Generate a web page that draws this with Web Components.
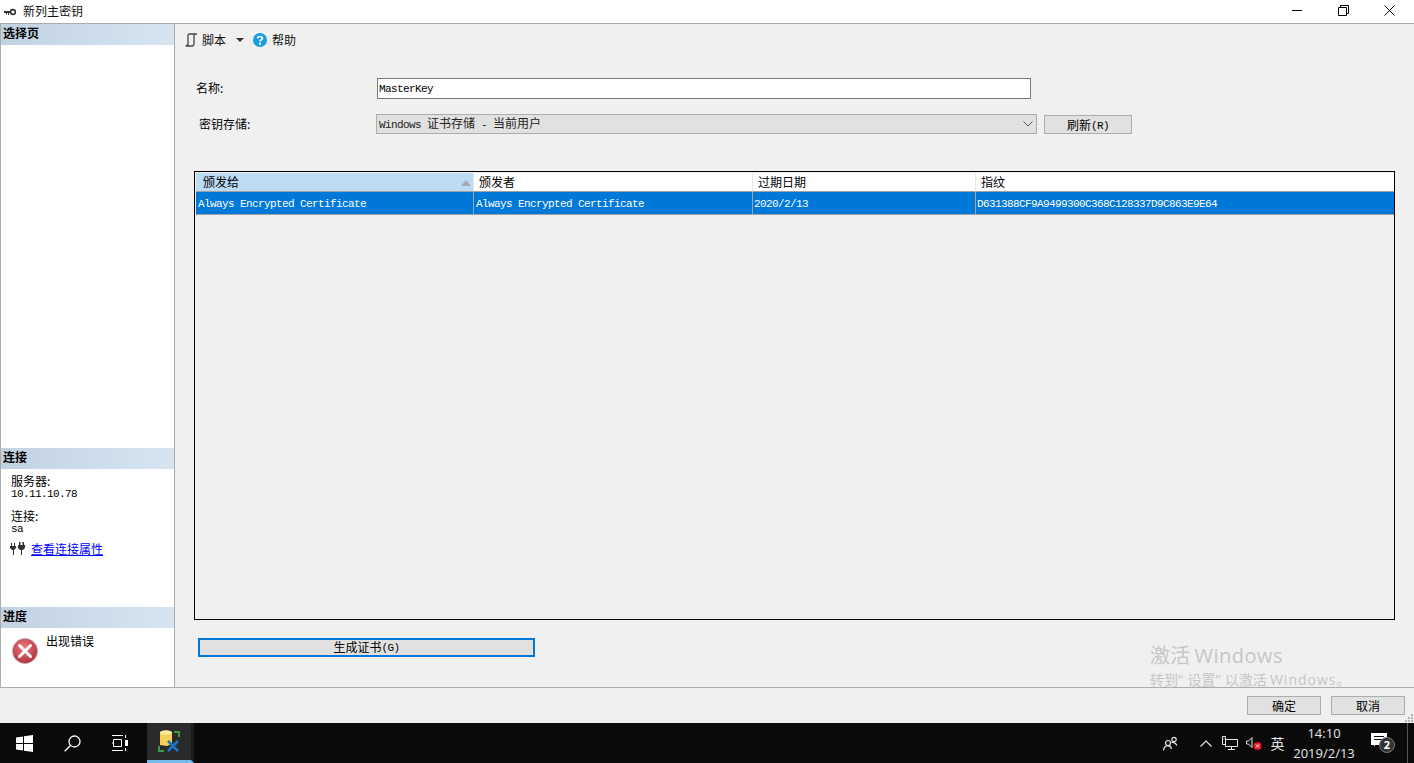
<!DOCTYPE html>
<html lang="zh">
<head>
<meta charset="utf-8">
<title>新列主密钥</title>
<style>
  html, body { margin: 0; height: 100%; overflow: hidden; background: #f0f0f0; }
  body { font: 12px/14px "Noto Sans CJK SC", sans-serif; color: #000; }
  key-app { height: 763px; }
</style>
</head>
<body>
<key-app></key-app>
<script>
const MONO = `.m { font: 11px/14px "Liberation Mono", monospace; letter-spacing: -.6px; }`;

class WinTitlebar extends HTMLElement {
  connectedCallback() {
    this.attachShadow({ mode: 'open' });
    this.shadowRoot.innerHTML = `
      <style>
        :host { display: flex; align-items: center; height: 23px; background: #fff; border-bottom: 1px solid #acacac; flex: none; }
        .icon { margin-left: 4px; width: 12px; height: 8px; flex: none; }
        .name { margin: -2px 0 0 7px; flex: 1; color: #111; }
        .ctl { width: 46px; height: 23px; display: flex; align-items: center; justify-content: center; flex: none; margin-top: -3px; }
        .ctls { display: flex; padding-right: 2px; }
      </style>
      <svg class="icon" viewBox="0 0 12 8"><path d="M0 3h7v2H5v2H4V5H3v1.5H2V5H0z" fill="#333"/><circle cx="9" cy="4" r="2.4" fill="none" stroke="#333" stroke-width="1.6"/></svg>
      <span class="name">新列主密钥</span>
      <div class="ctls">
        <div class="ctl"><svg width="10" height="10" viewBox="0 0 10 10"><path d="M0 5.5h10" stroke="#000"/></svg></div>
        <div class="ctl"><svg width="11" height="11" viewBox="0 0 11 11" fill="none" stroke="#000"><path d="M.5 2.5h8v8h-8z"/><path d="M2.5 2.5v-2h8v8h-2"/></svg></div>
        <div class="ctl"><svg width="11" height="11" viewBox="0 0 11 11"><path d="M.5.5l10 10M10.5.5l-10 10" stroke="#000" fill="none"/></svg></div>
      </div>`;
  }
}
customElements.define('win-titlebar', WinTitlebar);

class SideSection extends HTMLElement {
  connectedCallback() {
    this.attachShadow({ mode: 'open' });
    this.shadowRoot.innerHTML = `
      <style>
        :host { display: block; }
        .head { height: 21px; padding-left: 2px; font-weight: 700; line-height: 18px; color: #000;
                background: linear-gradient(90deg, #c2d2e1, #d7e5f2); }
      </style>
      <div class="head">${this.getAttribute('label')}</div>
      <slot></slot>`;
  }
}
customElements.define('side-section', SideSection);

class SidePanel extends HTMLElement {
  connectedCallback() {
    this.attachShadow({ mode: 'open' });
    this.shadowRoot.innerHTML = `
      <style>
        ${MONO}
        :host { display: flex; flex-direction: column; width: 173px; flex: none; background: #fff;
                border-left: 1px solid #acacac; border-right: 1px solid #acacac; }
        .sel { height: 424px; }
        .conn { height: 159px; }
        .conn-body { padding: 5px 0 0 10px; }
        .conn-body div { height: 13px; line-height: 13px; white-space: nowrap; }
        .conn-body .v { height: 10px; line-height: 11px; margin-top: 2px; }
        .gap { margin-top: 10px; }
        .linkrow { display: flex; align-items: center; margin-top: 6px; margin-left: -1px; height: 16px !important; }
        a { color: #00f; text-decoration: underline; margin-left: 6px; }
        .prog { display: flex; padding: 10px 0 0 11px; }
        .prog span { margin: -4px 0 0 8px; }
      </style>
      <side-section class="sel" label="选择页"></side-section>
      <side-section class="conn" label="连接">
        <div class="conn-body">
          <div>服务器:</div>
          <div class="v m">10.11.10.78</div>
          <div class="gap">连接:</div>
          <div class="v m">sa</div>
          <div class="linkrow">
            <svg width="15" height="13" viewBox="0 0 15 13" fill="#333"><path d="M0 4h6v2L4 8v5H3V8H2L0 6zM1 1h1v3H1zM4 1h1v3H4zM8 3h7v3l-2 2h-1v5h-1V8h-1L8 6zM9 0h1.500v3H9zM12.500 0H14v3h-1.500z"/></svg>
            <a>查看连接属性</a>
          </div>
        </div>
      </side-section>
      <side-section label="进度">
        <div class="prog">
          <svg width="26" height="26" viewBox="0 0 26 26">
            <defs><radialGradient id="e" cx="45%" cy="35%" r="70%"><stop offset="0" stop-color="#e9787f"/><stop offset="1" stop-color="#b32c38"/></radialGradient></defs>
            <circle cx="13" cy="13" r="12.500" fill="url(#e)" stroke="#a8a8a8" stroke-width=".6"/>
            <path d="M7.500 7.500l11 11M18.500 7.500l-11 11" stroke="#fff" stroke-width="3" stroke-linecap="round"/>
          </svg>
          <span>出现错误</span>
        </div>
      </side-section>`;
  }
}
customElements.define('side-panel', SidePanel);

class DlgButton extends HTMLElement {
  connectedCallback() {
    this.attachShadow({ mode: 'open' });
    this.shadowRoot.innerHTML = `
      <style>
        :host { display: block; box-sizing: border-box; height: 19px; text-align: center; line-height: 17px;
                background: #e1e1e1; border: 1px solid #adadad; color: #000; white-space: nowrap; }
        :host([focus]) { border: 2px solid #0078d7; line-height: 13px; }
      </style>
      <slot></slot>`;
  }
}
customElements.define('dlg-button', DlgButton);

class KeyToolbar extends HTMLElement {
  connectedCallback() {
    this.attachShadow({ mode: 'open' });
    this.shadowRoot.innerHTML = `
      <style>
        :host { display: flex; align-items: center; height: 31px; margin-left: -10px; flex: none; }
        .lbl { margin-left: 4px; color: #111; }
        .arrow { margin-left: 10px; }
        .help { margin-left: 9px; }
        .help + .lbl { margin-left: 5px; }
      </style>
      <svg width="14" height="14" viewBox="0 0 14 14" fill="none" stroke="#444" stroke-width="1.300"><path d="M4 13V2.500Q4 1 5.500 1H13M11 1Q10 1 10 3V10.500Q10 13 8 13H1.500Q3 13 3 11.500"/></svg>
      <span class="lbl">脚本</span>
      <svg class="arrow" width="8" height="4" viewBox="0 0 8 4"><path d="M0 0h8L4 4z" fill="#333"/></svg>
      <svg class="help" width="14" height="14" viewBox="0 0 14 14"><circle cx="7" cy="7" r="7" fill="#1b9ce0"/><path d="M4.700 5.300C4.700 2.900 9.400 2.900 9.400 5.300C9.400 6.800 7 6.800 7 8.500" fill="none" stroke="#fff" stroke-width="1.700"/><rect x="6" y="9.700" width="2" height="2" fill="#fff"/></svg>
      <span class="lbl">帮助</span>`;
  }
}
customElements.define('key-toolbar', KeyToolbar);

class KeyForm extends HTMLElement {
  connectedCallback() {
    this.attachShadow({ mode: 'open' });
    this.shadowRoot.innerHTML = `
      <style>
        ${MONO}
        :host { display: block; flex: none; }
        .row { display: flex; align-items: center; }
        .r1 { margin: 23px 0 0 2px; height: 21px; }
        .r2 { margin: 15px 0 0 5px; height: 20px; }
        .r1 label { width: 181px; margin-top: -2px; }
        .r2 label { width: 177px; }
        .input { box-sizing: border-box; width: 654px; height: 21px; background: #fff; border: 1px solid #7a7a7a; padding-left: 1px; line-height: 15px; }
        .select { box-sizing: border-box; width: 661px; height: 20px; background: #e1e1e1; border: 1px solid #adadad; padding-left: 2px; display: flex; align-items: center; white-space: pre; color: #222; }
        .select svg { margin-left: auto; margin-right: 3px; }
        dlg-button { width: 88px; margin: 1px 0 0 7px; }
      </style>
      <div class="row r1"><label>名称:</label><div class="input"><span class="m">MasterKey</span></div></div>
      <div class="row r2"><label>密钥存储:</label>
        <div class="select"><span><span class="m">Windows </span>证书存储<span class="m"> - </span>当前用户</span>
          <svg width="10" height="6" viewBox="0 0 10 6"><path d="M.5.5L5 5 9.500.5" fill="none" stroke="#555"/></svg></div>
        <dlg-button>刷新<span style='font:11px/14px "Liberation Mono",monospace;letter-spacing:-.6px;vertical-align:1px'>(R)</span></dlg-button>
      </div>`;
  }
}
customElements.define('key-form', KeyForm);

class CertTable extends HTMLElement {
  connectedCallback() {
    this.attachShadow({ mode: 'open' });
    this.shadowRoot.innerHTML = `
      <style>
        ${MONO}
        :host { display: block; box-sizing: border-box; height: 449px; margin-top: 37px; border: 1px solid #000; padding: 1px 0 0 1px; flex: none; }
        .grid { display: grid; grid-template-columns: 277px 279px 223px 419px; }
        .h { height: 18px; line-height: 18px; padding-left: 5px; background: #fff; border-left: 1px solid #e5e5e5; border-bottom: 1px solid #a0a0a0; position: relative; }
        .h:first-child { background: #bcdcf4; border-left: 0; padding-left: 7px; }
        .h svg { position: absolute; right: 2px; top: 7px; }
        .c { box-sizing: border-box; height: 23px; background: #0078d7; color: #fff; padding: 4px 0 0 2px; line-height: 16px; border-left: 1px solid #a0a0a0; border-bottom: 1px solid #a0a0a0; white-space: nowrap; overflow: hidden; }
        .c:nth-child(5) { border-left: 0; }
        .c:nth-child(7), .c:nth-child(8) { padding-left: 1px; }
      </style>
      <div class="grid">
        <div class="h">颁发给<svg width="10" height="6" viewBox="0 0 10 6"><path d="M5 0l5 6H0z" fill="#a0aab4"/></svg></div>
        <div class="h">颁发者</div>
        <div class="h">过期日期</div>
        <div class="h">指纹</div>
        <div class="c m">Always Encrypted Certificate</div>
        <div class="c m">Always Encrypted Certificate</div>
        <div class="c m">2020/2/13</div>
        <div class="c m">D631388CF9A9499300C368C128337D9C863E9E64</div>
      </div>`;
  }
}
customElements.define('cert-table', CertTable);

class MainPane extends HTMLElement {
  connectedCallback() {
    this.attachShadow({ mode: 'open' });
    this.shadowRoot.innerHTML = `
      <style>
        :host { display: flex; flex-direction: column; flex: 1; min-width: 0; padding: 0 19px; background: #f0f0f0; position: relative; }
        dlg-button { width: 337px; margin: 18px 0 0 4px; flex: none; }
        .mark { position: absolute; left: 975px; top: 618px; color: #c6c6c6; white-space: nowrap; font-family: "Noto Sans CJK SC", sans-serif; }
        .mark .a { font-size: 20px; line-height: 26px; }
        .mark .a i { letter-spacing: .5px; }
        .mark .b { font-size: 14px; line-height: 20px; }
        .mark .b b { font: 14px/20px "Open Sans", sans-serif; letter-spacing: 4.5px; }
        .mark .b i { letter-spacing: 1px; }
        .mark i { font-style: normal; font-family: "Open Sans", sans-serif; }
      </style>
      <key-toolbar></key-toolbar>
      <key-form></key-form>
      <cert-table></cert-table>
      <dlg-button focus>生成证书<span style='font:11px/13px "Liberation Mono",monospace;letter-spacing:-.6px;vertical-align:1px'>(G)</span></dlg-button>
      <div class="mark">
        <div class="a">激活 <i>Windows</i></div>
        <div class="b">转到<b>“</b>设置<b>”</b>以激活 <i>Windows</i>。</div>
      </div>`;
  }
}
customElements.define('main-pane', MainPane);

class DlgFooter extends HTMLElement {
  connectedCallback() {
    this.attachShadow({ mode: 'open' });
    this.shadowRoot.innerHTML = `
      <style>
        :host { display: flex; justify-content: flex-end; gap: 10px; box-sizing: border-box; height: 36px; padding: 8px 9px 0 0; background: #f0f0f0; border-top: 1px solid #acacac; flex: none; position: relative; }
        dlg-button { width: 74px; }
        svg { position: absolute; right: 0; bottom: 0; }
      </style>
      <dlg-button>确定</dlg-button>
      <dlg-button>取消</dlg-button>
      <svg width="9" height="9" viewBox="0 0 9 9" fill="#b4b4b4"><path d="M6 0h2v2H6zM3 3h2v2H3zM6 3h2v2H6zM0 6h2v2H0zM3 6h2v2H3zM6 6h2v2H6z"/></svg>`;
  }
}
customElements.define('dlg-footer', DlgFooter);

class TaskBar extends HTMLElement {
  connectedCallback() {
    this.attachShadow({ mode: 'open' });
    this.shadowRoot.innerHTML = `
      <style>
        :host { display: flex; align-items: stretch; height: 40px; background: #0a0a0a; color: #e6e6e6; flex: none; }
        .b { width: 48px; display: flex; align-items: center; justify-content: center; flex: none; }
        .app { width: 47px; margin-left: 3px; box-sizing: border-box; background: #2a2a2a; border-bottom: 3px solid #76b9ed; border-right: 3px solid #1c1c1c; padding-top: 1px; }
        .tray { margin-left: auto; display: flex; align-items: stretch; }
        .t { width: 24px; display: flex; align-items: center; justify-content: center; }
        .ime { width: 23px; font-size: 14px; }
        .clock { width: 70px; text-align: center; font: 13px/20px "Open Sans", sans-serif; }
        .note { width: 48px; display: flex; align-items: center; justify-content: center; }
        .end { width: 7px; border-left: 1px solid #555; box-sizing: border-box; }
      </style>
      <div class="b"><svg width="17" height="17" viewBox="0 0 17 17" fill="#fff"><path d="M0 2.500l7-1v6.500H0zM8 1.300L17 0v8H8zM0 9h7v6.500l-7-1zM8 9h9v8l-9-1.300z"/></svg></div>
      <div class="b"><svg width="17" height="17" viewBox="0 0 17 17" fill="none" stroke="#fff" stroke-width="1.300"><circle cx="10.500" cy="6.500" r="5.500"/><path d="M6.500 10.500L.7 16.300"/></svg></div>
      <div class="b"><svg width="17" height="16" viewBox="0 0 17 16" fill="none" stroke="#fff"><path d="M0 .5h11M0 15.500h11M1.500 4.500h8v7h-8zM0 8h1M13.500 0v3M13.500 13v3"/><rect x="13" y="5" width="3" height="6" fill="#fff" stroke="none"/></svg></div>
      <div class="b app"><svg width="24" height="24" viewBox="0 0 24 24">
        <path d="M3 2Q9 -1 15 2V14Q12 15 10 16L3 15z" fill="#f6cf57"/><ellipse cx="9" cy="2.500" rx="6" ry="2.200" fill="#fbe9a6"/>
        <path d="M17 2h5v5M2 16v5h5" fill="none" stroke="#3c9a45" stroke-width="2"/>
        <path d="M11 21L21 11M11 11l10 10" stroke="#1678c8" stroke-width="2.600"/>
      </svg></div>
      <div class="tray">
        <div class="t" style="margin-right:12px"><svg width="15" height="15" viewBox="0 0 15 15" fill="none" stroke="#e6e6e6" stroke-width="1.200"><circle cx="5" cy="7" r="2.500"/><path d="M.5 14.500Q1 10 5 9.700Q8 10 8.500 13"/><circle cx="11" cy="3.500" r="2.200"/><path d="M8.500 6.500Q12 5.500 14 9.500"/></svg></div>
        <div class="t"><svg width="12" height="7" viewBox="0 0 12 7" fill="none" stroke="#e6e6e6" stroke-width="1.200"><path d="M.5 6.500L6 1l5.500 5.500"/></svg></div>
        <div class="t"><svg width="16" height="14" viewBox="0 0 16 14" fill="none" stroke="#e6e6e6"><path d="M3.500 3.500h12v7H3.500zM9.500 10.500v3M6 13.500h7M.5.500h3v8h-3zM1.500 3h1"/></svg></div>
        <div class="t"><svg width="16" height="14" viewBox="0 0 16 14"><path d="M.5 5h2L6 1.500v10L2.500 8h-2z" fill="none" stroke="#e6e6e6"/><circle cx="11.500" cy="10" r="4" fill="#e81123"/><path d="M9.800 8.300l3.400 3.400M13.200 8.300l-3.400 3.400" stroke="#fff"/></svg></div>
        <div class="t ime">英</div>
        <div class="clock">14:10<br>2019/2/13</div>
        <div class="note"><svg width="24" height="22" viewBox="0 0 24 22"><path d="M0 1h16v12H4l-1 2v-2H0z" fill="#fff"/><path d="M3 4.500h10M3 7.500h10" stroke="#0a0a0a"/><circle cx="16" cy="13" r="7.500" fill="#333" stroke="#777"/><text x="16" y="17" text-anchor="middle" font-family="Open Sans" font-weight="700" font-size="11" fill="#fff">2</text></svg></div>
        <div class="end"></div>
      </div>`;
  }
}
customElements.define('task-bar', TaskBar);

class KeyApp extends HTMLElement {
  connectedCallback() {
    this.attachShadow({ mode: 'open' });
    this.shadowRoot.innerHTML = `
      <style>
        :host { display: flex; flex-direction: column; height: 763px; }
        .body { display: flex; height: 663px; flex: none; }
      </style>
      <win-titlebar></win-titlebar>
      <div class="body"><side-panel></side-panel><main-pane></main-pane></div>
      <dlg-footer></dlg-footer>
      <task-bar></task-bar>`;
  }
}
customElements.define('key-app', KeyApp);
</script>
</body>
</html>
